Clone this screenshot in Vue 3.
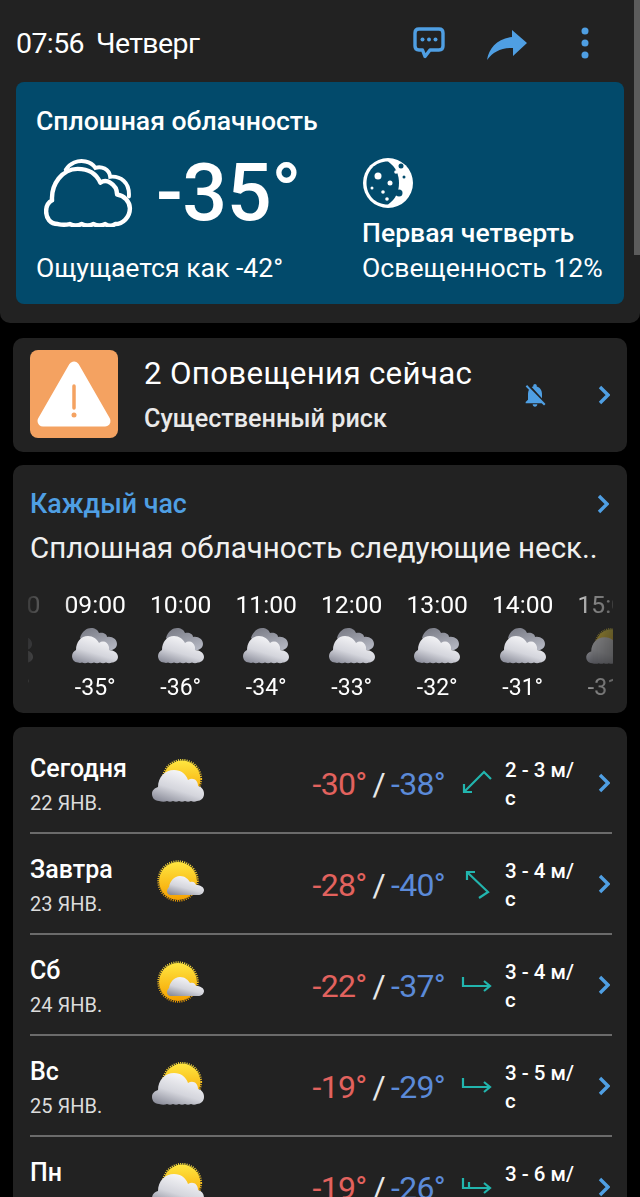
<script setup>
const hours = [
  { t: '08:00', v: '-35°', i: 'overcast' },
  { t: '09:00', v: '-35°', i: 'overcast' },
  { t: '10:00', v: '-36°', i: 'overcast' },
  { t: '11:00', v: '-34°', i: 'overcast' },
  { t: '12:00', v: '-33°', i: 'overcast' },
  { t: '13:00', v: '-32°', i: 'overcast' },
  { t: '14:00', v: '-31°', i: 'overcast' },
  { t: '15:00', v: '-31°', i: 'partlyA' },
]
const days = [
  { n: 'Сегодня', d: '22 ЯНВ.', i: 'partlyA', hi: '-30°', lo: '-38°', w: 'M3 25L23 5L30 12M3 17V25H11', s: '2 - 3 м/ с' },
  { n: 'Завтра', d: '23 ЯНВ.', i: 'partlyB', hi: '-28°', lo: '-40°', w: 'M6 4L27 24L18 30M6 12V4H14', s: '3 - 4 м/ с' },
  { n: 'Сб', d: '24 ЯНВ.', i: 'partlyB', hi: '-22°', lo: '-37°', w: 'M2 8V17H29M23 12L29 17L23 22', s: '3 - 4 м/ с' },
  { n: 'Вс', d: '25 ЯНВ.', i: 'partlyA', hi: '-19°', lo: '-29°', w: 'M2 8V17H29M23 12L29 17L23 22', s: '3 - 5 м/ с' },
  { n: 'Пн', d: '26 ЯНВ.', i: 'partlyA', hi: '-19°', lo: '-26°', w: 'M2 7V17H29M23 12L29 17L23 22M8 11V17', s: '3 - 6 м/ с' },
]
</script>

<template>
  <div class="page">
    <svg class="defs" width="0" height="0" aria-hidden="true">
      <defs>
        <linearGradient id="front" x1="0.65" y1="0.05" x2="0.15" y2="1">
          <stop offset="0" stop-color="#f7f7f9" />
          <stop offset="0.55" stop-color="#d4d5dc" />
          <stop offset="1" stop-color="#8a8c99" />
        </linearGradient>
        <linearGradient id="back" x1="0.2" y1="0" x2="0.8" y2="1">
          <stop offset="0" stop-color="#7b7d87" />
          <stop offset="1" stop-color="#b4b7c2" />
        </linearGradient>
        <linearGradient id="sun" x1="0.5" y1="0" x2="0.5" y2="1">
          <stop offset="0" stop-color="#ffe640" />
          <stop offset="1" stop-color="#f5a000" />
        </linearGradient>
        <symbol id="overcast" viewBox="0 0 46 36">
          <path fill="url(#back)" d="M8 10C10 3 15 0 19 0C23 0 26 2 27 5C31 4 35 6 35 9C40 8 45 11 45 16C45 19 43 21 40 22L20 22Z" />
          <path fill="url(#front)" d="M6 34.500C2 34.500 0 31 0 28C0 25 2 23 4 22C4 14 9 8 16 8C21 8 25 11 27 15C31 12 36 14 37 19C37 20 37 21 37 22C42 22 46 25 46 29C46 32 43 34.500 40 34.500C38 35.500 36 35.500 34 34.500C32 35.500 30 35.500 28 34.500C26 35.500 24 35.500 22 34.500C20 35.500 18 35.500 16 34.500C14 35.500 12 35.500 10 34.500C9 35 7 35 6 34.500Z" />
        </symbol>
        <symbol id="partlyA" viewBox="0 0 52 43">
          <circle cx="30" cy="20" r="18.500" fill="url(#sun)" />
          <circle cx="30" cy="20" r="19.200" fill="none" stroke="url(#sun)" stroke-width="1.800" stroke-dasharray="1 1.200" />
          <path fill="url(#front)" d="M7 42C2 42 0 38 0 35C0 31 3 29 6 28C6 18 13 11 22 11C29 11 34 15 36 21C41 18 46 21 46 27C50 28 52 31 52 35C52 39 49 42 45 42C43 43 41 43 39 42C37 43 35 43 33 42C31 43 29 43 27 42C25 43 23 43 21 42C19 43 17 43 15 42C13 43 10 43 7 42Z" />
        </symbol>
        <symbol id="partlyB" viewBox="0 0 52 43">
          <circle cx="26" cy="21" r="19" fill="url(#sun)" />
          <circle cx="26" cy="21" r="19.800" fill="none" stroke="url(#sun)" stroke-width="1.800" stroke-dasharray="1 1.200" />
          <path fill="url(#front)" d="M19 35C16 35 15 33 15 31C15 29 16 28 17 27C18 21 22 16 28 16C33 16 36 19 38 22C41 21 43 22 44 25C48 25 52 27 52 30C52 33 49 35 46 35Z" />
        </symbol>
      </defs>
    </svg>

    <div class="scrollbar"></div>

    <header class="top">
      <div class="topbar">
        <div class="clock"><span>07:56</span><span>Четверг</span></div>
        <div class="actions">
          <svg class="chat" viewBox="0 0 32 32" width="32" height="32">
            <path d="M6 2H26Q30 2 30 6V19Q30 23 26 23H17L12 29.500L9.500 23H6Q2 23 2 19V6Q2 2 6 2Z" fill="none" stroke="#4f9fe3" stroke-width="3.400" stroke-linejoin="round" />
            <circle cx="9.500" cy="12.500" r="2" fill="#4f9fe3" />
            <circle cx="16" cy="12.500" r="2" fill="#4f9fe3" />
            <circle cx="22.500" cy="12.500" r="2" fill="#4f9fe3" />
          </svg>
          <svg class="share" viewBox="0 0 40 30" width="40" height="30">
            <path d="M25 0L40 13L26 26V18C14 17.500 6 22 0 30C2 18 10 9 25 7Z" fill="#4f9fe3" />
          </svg>
          <svg class="more" viewBox="0 0 8 32" width="8" height="32">
            <circle cx="4" cy="4" r="3.500" fill="#4f9fe3" />
            <circle cx="4" cy="16" r="3.500" fill="#4f9fe3" />
            <circle cx="4" cy="28" r="3.500" fill="#4f9fe3" />
          </svg>
        </div>
      </div>

      <section class="now">
        <h1 class="cond">Сплошная облачность</h1>
        <div class="now-main">
          <div class="now-left">
            <div class="now-temp">
              <svg class="cloud-line" viewBox="0 0 90 69" width="89" height="68">
                <path d="M14 66C6 66 2 60 2 53C2 48 4 44 8 42C7 26 18 10 34 10C45 10 53 15 57 24C60 22 64 22 67 24C72 27 74 32 74 36C81 37 87 43 87 50C87 59 80 66 72 66C69 68 65 68 62 66C58 68 54 68 50 66C46 68 42 68 38 66C34 68 30 68 26 66C22 67 18 67 14 66Z" fill="none" stroke="#fff" stroke-width="4.500" stroke-linejoin="round" />
                <path d="M22 11C26 4 34 1 42 2.500C47 3.500 50 6 52 9C58 7 66 10 67 18C77 17 87 23 86 38" fill="none" stroke="#fff" stroke-width="4" stroke-linecap="round" />
              </svg>
              <span class="big">-35°</span>
            </div>
            <p class="line feel">Ощущается как -42°</p>
          </div>
          <div class="now-right">
            <svg class="moon" viewBox="0 0 50 50" width="50" height="50">
              <circle cx="25" cy="25" r="25" fill="#fff" />
              <path d="M25 3.500C12 3.500 3.500 13 3.500 25C3.500 37 12 46.500 25 46.500C33 41 36 33 36 25C36 17 33 9 25 3.500Z" fill="#024a6b" />
              <circle cx="15" cy="18" r="3.500" fill="#fff" />
              <circle cx="27" cy="25" r="2.500" fill="#fff" />
              <circle cx="33" cy="14" r="1.800" fill="#fff" />
              <circle cx="20" cy="34" r="1.800" fill="#fff" />
              <circle cx="9" cy="30" r="1.500" fill="#fff" />
              <circle cx="24" cy="41" r="1.800" fill="#fff" />
              <circle cx="36" cy="35" r="3.500" fill="#024a6b" />
              <circle cx="38" cy="8" r="2.500" fill="#024a6b" />
              <circle cx="41" cy="19" r="1.500" fill="#024a6b" />
            </svg>
            <p class="phase">Первая четверть</p>
            <p class="line">Освещенность 12%</p>
          </div>
        </div>
      </section>
    </header>

    <section class="card alerts">
      <div class="alert-box">
        <svg viewBox="0 0 88 88" width="88" height="88">
          <path d="M44 17L75 71H13Z" fill="#fff" stroke="#fff" stroke-width="11" stroke-linejoin="round" />
          <path d="M44 36V58" stroke="#f4a261" stroke-width="3.500" stroke-linecap="round" />
          <circle cx="44" cy="65" r="2.500" fill="#f4a261" />
        </svg>
      </div>
      <div class="alert-text">
        <div class="alert-title">2 Оповещения сейчас</div>
        <div class="alert-sub">Существенный риск</div>
      </div>
      <svg class="bell" viewBox="0 0 24 24" width="28" height="28">
        <path fill="#4f9fe3" d="M20 18.690L7.840 6.140 5.270 3.490 4 4.760l2.800 2.800v.01c-.52.99-.8 2.160-.8 3.420v5l-2 2v1h13.730l2 2L21 19.720l-1-1.030zM12 22c1.110 0 2-.89 2-2h-4c0 1.110.89 2 2 2zm6-7.320V11c0-3.080-1.640-5.640-4.500-6.320V4c0-.83-.67-1.500-1.500-1.500s-1.500.67-1.500 1.500v.68c-.15.03-.29.08-.42.12-.1.03-.2.07-.3.11h-.01c-.2.08-.4.17-.59.27-.01 0-.01 0-.02.01L18 14.680z" />
      </svg>
      <svg class="chev" viewBox="0 0 12 20" width="12" height="20"><path d="M2 2L10 10L2 18" fill="none" stroke="#4f9fe3" stroke-width="3.400" /></svg>
    </section>

    <section class="card hourly">
      <div class="hourly-head">
        <span class="hourly-title">Каждый час</span>
        <svg viewBox="0 0 12 20" width="12" height="20"><path d="M2 2L10 10L2 18" fill="none" stroke="#4f9fe3" stroke-width="3.400" /></svg>
      </div>
      <p class="hourly-desc">Сплошная облачность следующие неск..</p>
      <div class="hours">
        <div class="hours-track">
          <div v-for="h in hours" :key="h.t" class="hour">
            <span class="hour-t">{{ h.t }}</span>
            <svg class="hour-i" width="46" height="36"><use :href="'#' + h.i" /></svg>
            <span class="hour-v">{{ h.v }}</span>
          </div>
        </div>
      </div>
    </section>

    <section class="card daily">
      <div v-for="d in days" :key="d.d" class="day">
        <div class="day-name">
          <div class="dn">{{ d.n }}</div>
          <div class="dd">{{ d.d }}</div>
        </div>
        <svg class="day-i" width="52" height="43"><use :href="'#' + d.i" /></svg>
        <div class="temps"><span class="hi">{{ d.hi }}</span><span class="sl">/</span><span class="lo">{{ d.lo }}</span></div>
        <svg class="wind" viewBox="0 0 32 32" width="32" height="32">
          <path :d="d.w" fill="none" stroke="#22b5ae" stroke-width="2.200" />
        </svg>
        <div class="speed">{{ d.s }}</div>
        <svg class="day-chev" viewBox="0 0 12 20" width="12" height="20"><path d="M2 2L10 10L2 18" fill="none" stroke="#4f9fe3" stroke-width="3.400" /></svg>
      </div>
    </section>
  </div>
</template>

<style>
html, body { background: #000; }
</style>

<style scoped>
.page {
  position: relative;
  width: 640px;
  height: 1197px;
  overflow: hidden;
  background: #000;
  color: #fff;
  font-family: Roboto, "Noto Sans", sans-serif;
}
.defs { position: absolute; }
.scrollbar {
  position: absolute;
  top: 0;
  right: 0;
  width: 6px;
  height: 255px;
  background: #5c5c5c;
}
p, h1 { margin: 0; }
.top {
  height: 323px;
  box-sizing: border-box;
  background: #222;
  border-radius: 0 0 10px 10px;
  padding: 0 16px;
}
.topbar {
  height: 82px;
  display: flex;
  align-items: flex-start;
  justify-content: space-between;
}
.clock {
  display: flex;
  gap: 12px;
  margin: 27px 0 0 0;
  font-size: 28.500px;
  line-height: 34px;
  letter-spacing: -0.6px;
}
.actions { display: flex; }
.chat { margin: 27px 0 0 0; }
.share { margin: 30px 0 0 42px; }
.more { margin: 27px 35px 0 54px; }
.now {
  height: 222px;
  box-sizing: border-box;
  width: 608px;
  background: #024a6b;
  border-radius: 8px;
  padding: 22px 20px 0;
}
.cond {
  font-size: 26.600px;
  line-height: 34px;
  font-weight: 500;
}
.now-main { display: flex; }
.now-left { width: 326px; }
.now-temp {
  display: flex;
  align-items: center;
  height: 90px;
  margin-top: 10px;
}
.cloud-line { margin-left: 8px; margin-right: 1px; flex: none; }
.big {
  margin-left: 22px;
  font-size: 79px;
  line-height: 90px;
  font-weight: 500;
  letter-spacing: -0.5px;
}
.line { font-size: 26.600px; line-height: 32px; white-space: nowrap; }
.feel { margin-top: 14px; }
.moon { display: block; margin: 20px 0 0 1px; }
.phase {
  font-size: 26.600px;
  line-height: 32px;
  font-weight: 500;
  margin-top: 9px;
  margin-bottom: 3px;
  white-space: nowrap;
}
.card {
  margin: 0 13px;
  background: #222;
  border-radius: 10px;
}
.alerts {
  margin-top: 15px;
  height: 114px;
  display: flex;
  align-items: center;
  padding: 0 17px;
}
.alert-box {
  width: 88px;
  height: 88px;
  background: #f4a261;
  border-radius: 8px;
  flex: none;
  margin-top: -2px;
}
.alert-box svg { display: block; }
.alert-text { margin-left: 26px; flex: 1; white-space: nowrap; }
.alert-title { font-size: 31.300px; line-height: 36px; letter-spacing: 0.3px; }
.alert-sub {
  font-size: 25.200px;
  line-height: 30px;
  margin-top: 12px;
  font-weight: 500;
  color: #e9e9e9;
}
.bell { flex: none; }
.chev { flex: none; margin: 0 0 0 49px; }
.hourly {
  margin-top: 13px;
  height: 248px;
  padding-top: 22px;
  box-sizing: border-box;
}
.hourly-head {
  display: flex;
  align-items: center;
  justify-content: space-between;
  padding: 0 18px 0 17px;
  height: 34px;
}
.hourly-title {
  color: #4f9fe3;
  font-size: 26.800px;
  font-weight: 500;
}
.hourly-desc {
  margin: 9px 0 0 17px;
  font-size: 29.500px;
  line-height: 36px;
  color: #f0f0f0;
  white-space: nowrap;
}
.hours {
  margin: 24px 14px 0 15px;
  height: 118px;
  overflow: hidden;
  -webkit-mask-image: linear-gradient(90deg, rgba(0,0,0,.12) 0, rgba(0,0,0,.25) 12px, #000 45px, #000 540px, rgba(0,0,0,.45) 565px, rgba(0,0,0,.3) 585px);
  mask-image: linear-gradient(90deg, rgba(0,0,0,.12) 0, rgba(0,0,0,.25) 12px, #000 45px, #000 540px, rgba(0,0,0,.45) 565px, rgba(0,0,0,.3) 585px);
}
.hours-track {
  display: flex;
  margin-left: -61px;
}
.hour {
  flex: none;
  width: 85.500px;
  display: flex;
  flex-direction: column;
  align-items: center;
}
.hour-t { font-size: 24.700px; line-height: 30px; }
.hour-i { display: block; margin-top: 8px; }
.hour-v { font-size: 23px; line-height: 28px; margin-top: 10px; }
.daily {
  margin-top: 14px;
  height: 600px;
  padding: 6px 15px 0 17px;
  box-sizing: border-box;
}
.day {
  height: 101px;
  box-sizing: border-box;
  display: flex;
  align-items: center;
  border-bottom: 2px solid #6b6b6b;
}
.day-name { width: 122px; flex: none; margin-top: 4px; }
.dn { font-size: 25px; line-height: 30px; font-weight: 500; }
.dd { font-size: 20px; line-height: 26px; margin-top: 6px; color: #dcdcdc; }
.day-i { flex: none; margin-top: -5px; }
.temps {
  flex: 1;
  display: flex;
  justify-content: flex-end;
  font-size: 32px;
  line-height: 40px;
  letter-spacing: -0.7px;
  margin-top: 2px;
  margin-right: 4px;
}
.hi { color: #e2625e; }
.lo { color: #5b8ad8; }
.sl { color: #e8e8e8; margin: 0 6px; }
.wind { flex: none; margin-left: 12px; }
.speed {
  flex: none;
  width: 77px;
  margin-left: 12px;
  margin-top: 2px;
  font-size: 20.500px;
  line-height: 28px;
  font-weight: 500;
}
.day-chev { flex: none; margin-left: 16px; margin-right: 2px; }
</style>
